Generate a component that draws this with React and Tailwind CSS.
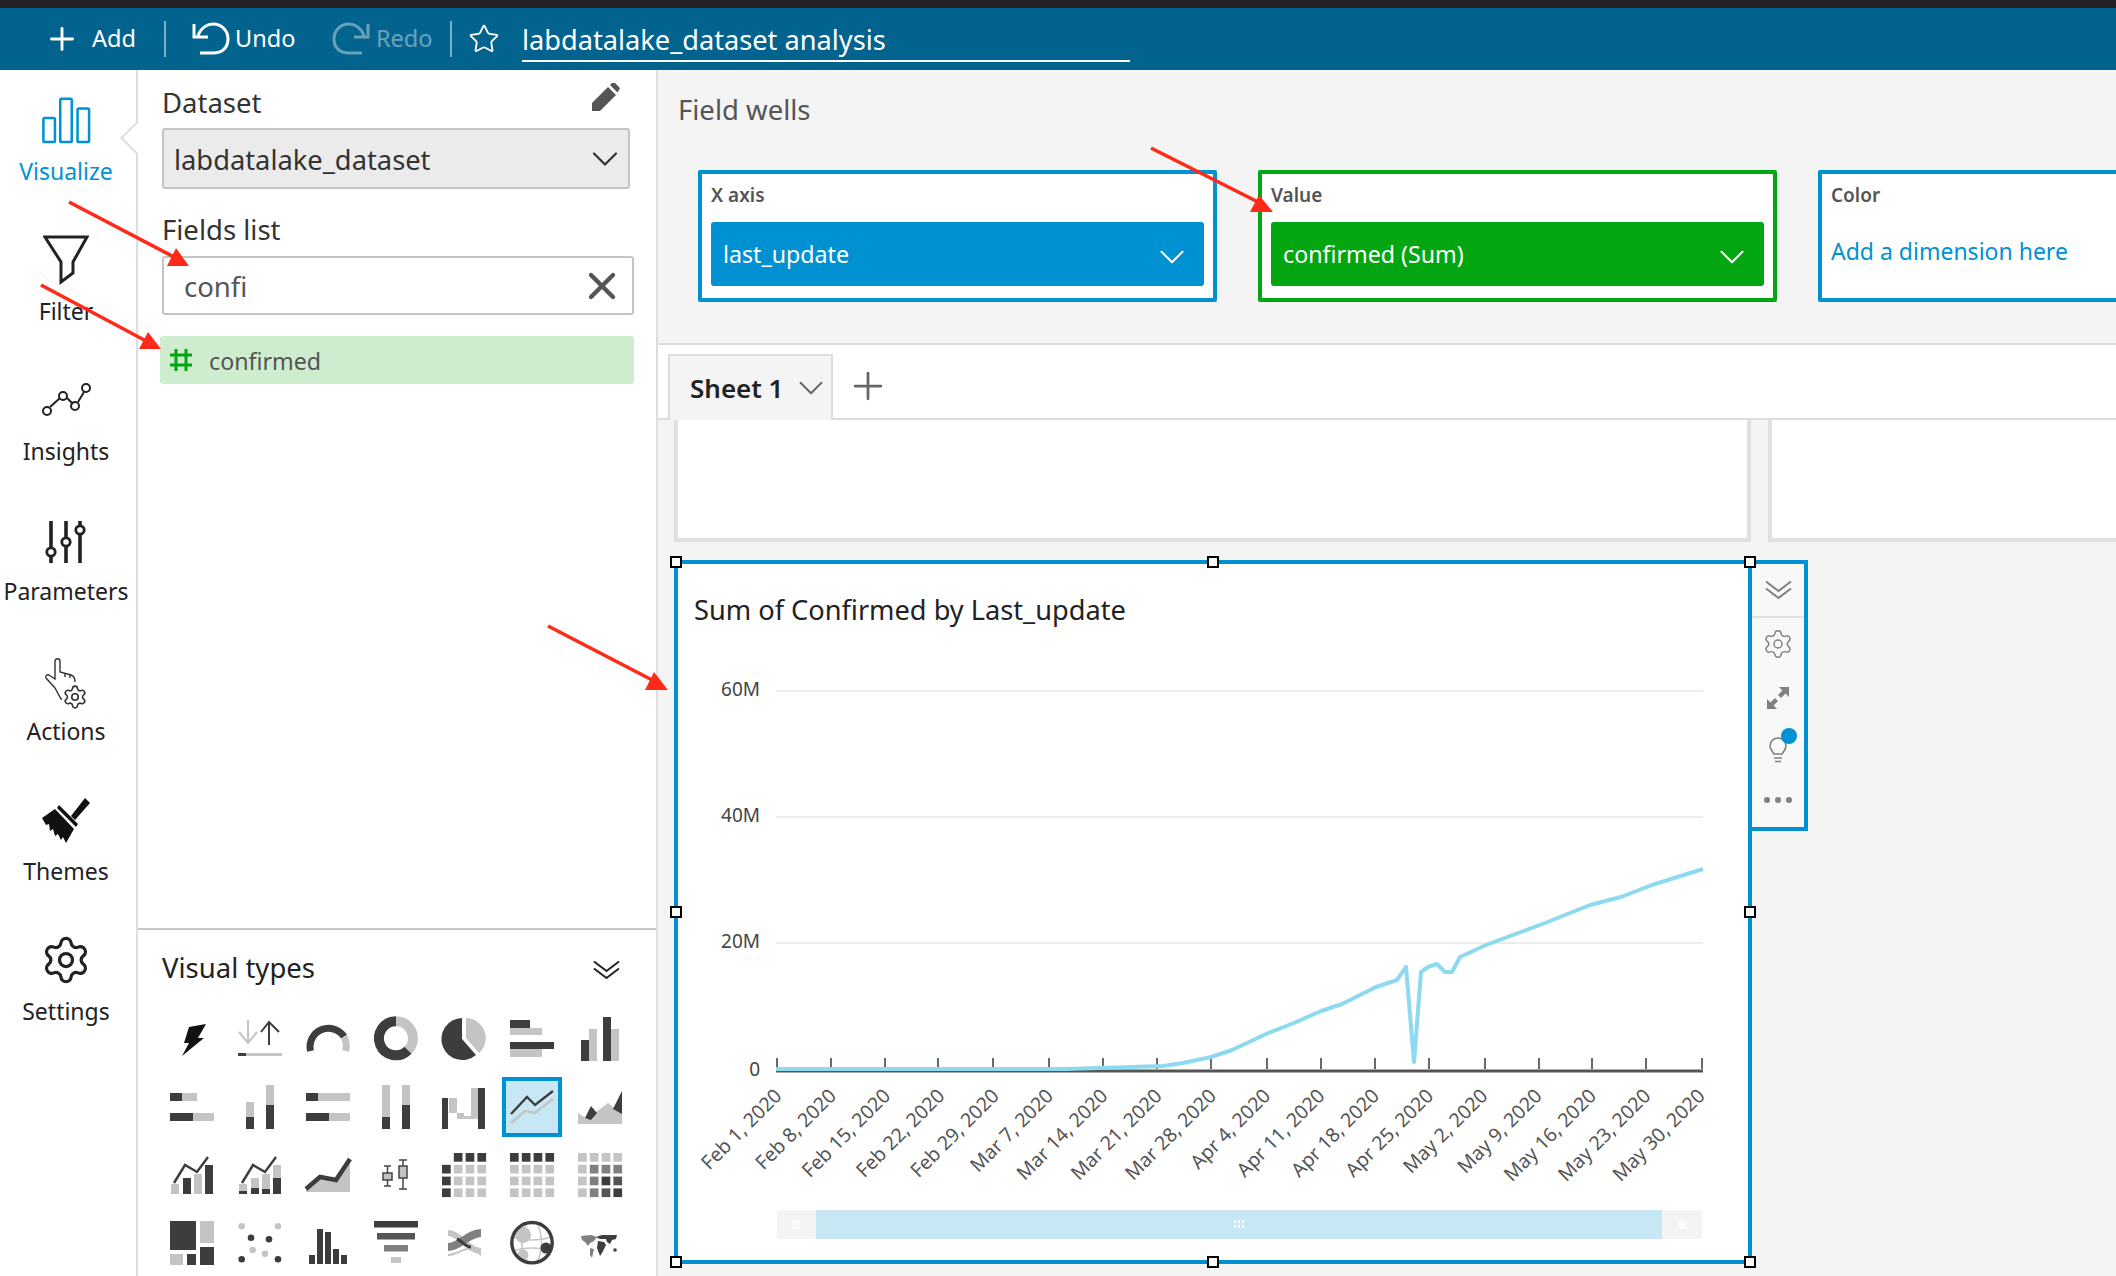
import { ChevronDown, Plus, Settings, Star, X } from "lucide-react";

const DARK = "#3d3d3d";
const LIGHT = "#c4c4c4";
const MID = "#808080";

const railItems = ["Visualize", "Filter", "Insights", "Parameters", "Actions", "Themes", "Settings"];

const tickXs = [777, 831, 885, 938, 993, 1049, 1103, 1157, 1211, 1267, 1321, 1375, 1429, 1485, 1539, 1592, 1646, 1702];

const dateLabels = [
  "Feb 1, 2020", "Feb 8, 2020", "Feb 15, 2020", "Feb 22, 2020", "Feb 29, 2020", "Mar 7, 2020",
  "Mar 14, 2020", "Mar 21, 2020", "Mar 28, 2020", "Apr 4, 2020", "Apr 11, 2020", "Apr 18, 2020",
  "Apr 25, 2020", "May 2, 2020", "May 9, 2020", "May 16, 2020", "May 23, 2020", "May 30, 2020",
];

const linePoints =
  "776,1069 1066,1069 1163,1066 1183,1063 1211,1057 1232,1050 1266,1034 1294,1023 1321,1011 1342,1004 1376,987 1397,980 1406,967 1414,1062 1421,972 1428,967 1437,964 1445,972 1452,972 1460,957 1486,945 1545,923 1590,905 1621,897 1652,885 1703,869";

function Bars({ items }) {
  return items.map(([x, y, w, h, fill], i) => <rect key={i} x={x} y={y} width={w} height={h} fill={fill} />);
}

function GridCells({ rows }) {
  return rows.flatMap((row, r) =>
    row.map((fill, c) =>
      fill ? <rect key={`${r}-${c}`} x={c * 11.8} y={r * 11.8} width="8.7" height="8.7" fill={fill} /> : null
    )
  );
}

function DoubleChevron({ color, className }) {
  return (
    <svg width="27" height="20" viewBox="0 0 27 20" fill="none" stroke={color} strokeWidth="2" className={className}>
      <path d="M1 1.5L13.5 11L26 1.5" />
      <path d="M1 8.5L13.5 18L26 8.5" />
    </svg>
  );
}

const visualIcons = [
  <polygon points="19,10 36,7 28,21 34,21 12,39 19,26 14,26" fill="#111" />,
  <g fill="none" strokeWidth="2">
    <path d="M10 3V26M1 15L10 26L19 15" stroke={LIGHT} />
    <path d="M31 5V28M23 15L31 5L41 15" stroke={DARK} />
    <rect x="0" y="36" width="44" height="3" fill={LIGHT} stroke="none" />
    <rect x="0" y="36" width="8" height="3" fill={DARK} stroke="none" />
  </g>,
  <g fill="none" strokeWidth="7">
    <path d="M4.5 34A18.5 18.5 0 0 1 38 19.7" stroke={DARK} />
    <path d="M38 19.7A18.5 18.5 0 0 1 39.5 34" stroke={LIGHT} />
  </g>,
  <g fill="none" strokeWidth="10">
    <path d="M22 4.3A17 17 0 0 1 34 33.3" stroke={LIGHT} />
    <path d="M34 33.3A17 17 0 1 1 22 4.3" stroke={DARK} />
  </g>,
  <g>
    <path d="M20 22V1A21 21 0 1 0 34 38Z" fill={DARK} />
    <path d="M24 1A20 20 0 0 1 37 36L24 21Z" fill={LIGHT} />
  </g>,
  <Bars items={[[0, 3, 20, 8, DARK], [0, 11, 32, 7, LIGHT], [0, 25, 44, 7, DARK], [0, 32, 32, 8, LIGHT]]} />,
  <Bars items={[[3, 23, 8, 21, DARK], [11, 12, 8, 32, LIGHT], [25, 0, 8, 44, DARK], [33, 12, 8, 32, LIGHT]]} />,

  <Bars items={[[0, 8, 27, 8, LIGHT], [0, 8, 12, 8, DARK], [0, 28, 44, 8, LIGHT], [0, 28, 23, 8, DARK]]} />,
  <Bars items={[[8, 17, 8, 15, LIGHT], [8, 32, 8, 12, DARK], [28, 0, 8, 20, LIGHT], [28, 20, 8, 24, DARK]]} />,
  <Bars items={[[0, 8, 44, 8, LIGHT], [0, 8, 12, 8, DARK], [0, 28, 44, 8, LIGHT], [0, 28, 23, 8, DARK]]} />,
  <Bars items={[[8, 0, 8, 32, LIGHT], [8, 32, 8, 12, DARK], [28, 0, 8, 20, LIGHT], [28, 20, 8, 24, DARK]]} />,
  <Bars items={[[0, 13, 6, 31, DARK], [7, 13, 8, 15, LIGHT], [15, 28, 7, 6, LIGHT], [22, 31, 8, 3, LIGHT], [29, 3, 7, 31, LIGHT], [36, 3, 7, 41, DARK]]} />,
  null,
  <g>
    <polygon points="0,28 9,34 30,18 44,29 44,39 0,39" fill={LIGHT} />
    <polygon points="7,33 13,21 19,28 13,35" fill={DARK} />
    <polygon points="35,24 44,6 44,29" fill={DARK} />
  </g>,

  <g>
    <Bars items={[[1, 31, 8, 10, LIGHT], [13, 25, 8, 16, DARK], [24, 21, 8, 20, LIGHT], [35, 12, 8, 29, DARK]]} />
    <polyline points="4,30 15,12 27,19 38,4" fill="none" stroke={DARK} strokeWidth="2.4" />
  </g>,
  <g>
    <Bars items={[[1, 31, 8, 7, LIGHT], [1, 38, 8, 3, DARK], [13, 25, 8, 10, LIGHT], [13, 35, 8, 6, DARK], [24, 21, 8, 15, LIGHT], [24, 36, 8, 5, DARK], [35, 12, 8, 13, LIGHT], [35, 25, 8, 16, DARK]]} />
    <polyline points="4,30 15,12 27,19 38,4" fill="none" stroke={DARK} strokeWidth="2.4" />
  </g>,
  <g>
    <polygon points="0,36 14,24 30,27 44,6 44,39 0,39" fill={LIGHT} />
    <polyline points="0,36 14,24 30,27 44,6" fill="none" stroke={DARK} strokeWidth="4.5" />
  </g>,
  <g stroke="#444" strokeWidth="1.5" fill="none">
    <path d="M13.5 13V33M10 13H17M10 33H17M29 7V36M25 7H33M25 36H33" />
    <rect x="9" y="20" width="9" height="7" fill={LIGHT} />
    <rect x="25" y="13" width="8" height="12" fill={LIGHT} />
  </g>,
  <GridCells rows={[[null, DARK, DARK, DARK], [DARK, LIGHT, LIGHT, LIGHT], [DARK, LIGHT, LIGHT, LIGHT], [DARK, LIGHT, LIGHT, LIGHT]]} />,
  <GridCells rows={[[DARK, DARK, DARK, DARK], [LIGHT, LIGHT, LIGHT, LIGHT], [LIGHT, LIGHT, LIGHT, LIGHT], [LIGHT, LIGHT, LIGHT, LIGHT]]} />,
  <GridCells rows={[[LIGHT, LIGHT, LIGHT, LIGHT], [LIGHT, MID, MID, MID], [LIGHT, MID, DARK, "#555"], [LIGHT, MID, "#555", DARK]]} />,

  <Bars items={[[0, 0, 26, 29, DARK], [30, 0, 14, 22, LIGHT], [0, 33, 13, 11, LIGHT], [17, 33, 9, 11, DARK], [30, 26, 14, 18, DARK]]} />,
  <g>
    <circle cx="3.7" cy="5.3" r="3.3" fill={LIGHT} />
    <circle cx="40" cy="5.3" r="3.3" fill={LIGHT} />
    <circle cx="14.7" cy="29" r="3.3" fill={LIGHT} />
    <circle cx="27" cy="32.7" r="3.3" fill={LIGHT} />
    <circle cx="13" cy="16.7" r="3.3" fill={DARK} />
    <circle cx="31" cy="18.3" r="3.3" fill={DARK} />
    <circle cx="3.7" cy="38.3" r="3.3" fill={DARK} />
    <circle cx="40" cy="38.3" r="3.3" fill={DARK} />
  </g>,
  <Bars items={[[3, 34, 6, 9, DARK], [11, 8, 6, 35, DARK], [19, 11, 6, 32, DARK], [27, 28, 6, 15, DARK], [35, 34, 6, 9, DARK]]} />,
  <Bars items={[[0, 0, 44, 6.5, DARK], [3, 12, 38, 6.5, "#555"], [10, 24, 24, 6.5, MID], [17, 36, 10, 6, LIGHT]]} />,
  <g fill="none">
    <path d="M6 12C18 12 26 30 39 30" stroke={LIGHT} strokeWidth="6" />
    <path d="M6 26C18 26 26 12 39 12" stroke={MID} strokeWidth="8" />
    <path d="M6 34C18 34 26 20 39 34" stroke={LIGHT} strokeWidth="2" />
    <path d="M15 18C20 20 24 26 29 26" stroke={DARK} strokeWidth="3" />
  </g>,
  <g>
    <circle cx="13" cy="14" r="8" fill={LIGHT} />
    <circle cx="13" cy="34" r="5.5" fill={LIGHT} />
    <path d="M3 16C14 20 30 20 41 16M4 30C14 26 30 26 40 30M17 2C10 14 10 30 17 41M27 2C33 14 33 30 27 41" fill="none" stroke={LIGHT} strokeWidth="1.5" />
    <circle cx="36" cy="27" r="5.5" fill={DARK} />
    <circle cx="22" cy="21.7" r="20.2" fill="none" stroke={DARK} strokeWidth="3.4" />
  </g>,
  <g>
    <path d="M3 15L13 14L19 16L16 20L12 22L10 25L7 21L4 19Z" fill={MID} />
    <path d="M12 27L16 28L14 37L12 34Z" fill={MID} />
    <path d="M18 16L24 14L39 14L38 18L34 19L32 23L29 21L28 18L22 18Z" fill={DARK} />
    <path d="M20 20L26 21L28 24L24 32L22 35L19 27Z" fill={DARK} />
    <circle cx="37" cy="29" r="1.8" fill={DARK} />
  </g>,
];

function VisualizeIcon() {
  return (
    <svg width="50" height="50" viewBox="40 96 52 50" fill="none" stroke="#0091d2" strokeWidth="2.6">
      <rect x="42.5" y="119" width="12" height="25" rx="1.5" />
      <rect x="60" y="99" width="12" height="45" rx="1.5" />
      <rect x="78" y="109" width="12" height="35" rx="1.5" />
    </svg>
  );
}

function RailIcon({ name }) {
  if (name === "Visualize") return <VisualizeIcon />;
  if (name === "Filter") {
    return (
      <svg width="46" height="50" viewBox="0 0 46 50" fill="none" stroke="#222" strokeWidth="3">
        <path d="M2 2H44L30 27V38L18 47V27Z" />
      </svg>
    );
  }
  if (name === "Insights") {
    return (
      <svg width="50" height="36" viewBox="0 0 50 36" fill="none" stroke="#222" strokeWidth="2">
        <path d="M9 25L19 16M26 16L32 22M37 20L43 10" />
        <circle cx="6" cy="29" r="4" />
        <circle cx="22" cy="14" r="4" />
        <circle cx="34" cy="24" r="4" />
        <circle cx="45" cy="6" r="4" />
      </svg>
    );
  }
  if (name === "Parameters") {
    return (
      <svg width="42" height="46" viewBox="0 0 42 46" fill="none" stroke="#222" strokeWidth="3.6" className="mt-[4px]">
        <path d="M6 2V44M21 2V44M35 2V44" />
        <circle cx="6" cy="33" r="4.2" fill="#fff" strokeWidth="2.8" />
        <circle cx="21" cy="23" r="4.2" fill="#fff" strokeWidth="2.8" />
        <circle cx="35" cy="11" r="4.2" fill="#fff" strokeWidth="2.8" />
      </svg>
    );
  }
  if (name === "Actions") {
    return (
      <div className="relative w-[44px] h-[52px] mt-[8px]">
        <svg width="34" height="46" viewBox="0 0 34 46" fill="none" stroke="#333" strokeWidth="1.4">
          <path d="M11 30L2 20C1 18 3 16 5 17L11 21V3C11 0 16 0 16 3V14L27 17C30 18 31 20 31 24M11 30L17 41H22" />
          <path d="M21 15V19M26 16V20" />
        </svg>
        <Settings size={26} strokeWidth={1.5} color="#333" className="absolute right-0 bottom-0 bg-white rounded-full" />
      </div>
    );
  }
  if (name === "Themes") {
    return (
      <svg width="50" height="48" viewBox="0 0 50 48" fill="#111" className="mt-[2px]">
        <polygon points="30,19 44,1 49,6 34,23" />
        <polygon points="18,8 37,27 35,30 16,11" />
        <polygon points="14,12 33,32 25,46 22,40 20,43 17,37 14,39 12,32 9,34 8,27 5,28 1,21" />
      </svg>
    );
  }
  return <Settings size={52} strokeWidth={1.5} color="#222" />;
}

function HeaderButton({ icon, label, className }) {
  return (
    <div className={`flex items-center ${className}`}>
      {icon}
      <span className="text-[23.5px] leading-none">{label}</span>
    </div>
  );
}

function Well({ title, color, pill, children }) {
  const borderClass = color === "green" ? "border-[#02a610]" : "border-[#0091d2]";
  const pillClass = color === "green" ? "bg-[#02a610]" : "bg-[#0091d2]";
  return (
    <div className={`w-[519px] h-[132px] shrink-0 border-[4px] ${borderClass} bg-white rounded-[2px] pl-[9px] pr-[9px] pt-[8px]`}>
      <div className="text-[19px] leading-[26px] font-semibold text-[#555]">{title}</div>
      {pill ? (
        <div className={`mt-[14px] h-[64px] rounded-[3px] ${pillClass} flex items-center justify-between pl-[12px] pr-[11px] text-white`}>
          <span className="text-[23.2px]">{pill}</span>
          <ChevronDown size={42} strokeWidth={1.2} className="mt-[6px]" />
        </div>
      ) : (
        children
      )}
    </div>
  );
}

function Handle({ className }) {
  return <div className={`absolute w-[12px] h-[12px] bg-white border-2 border-black z-10 ${className}`} />;
}

function LineChart() {
  return (
    <svg width="1069" height="620" viewBox="678 640 1069 620" className="block">
      {[[691, "60M"], [817, "40M"], [943, "20M"], [1071, "0"]].map(([y, label]) => (
        <text key={label} x="760" y={y + 5} textAnchor="end" fontSize="19" fill="#444">{label}</text>
      ))}
      {[691, 817, 943].map((y) => (
        <line key={y} x1="776" x2="1703" y1={y} y2={y} stroke="#ececec" strokeWidth="2" />
      ))}
      {tickXs.map((x) => (
        <line key={x} x1={x} x2={x} y1="1058" y2="1069" stroke="#444" strokeWidth="1.6" />
      ))}
      <line x1="776" x2="1703" y1="1071" y2="1071" stroke="#555" strokeWidth="3" />
      <polyline points={linePoints} fill="none" stroke="#8ddaf0" strokeWidth="4" strokeLinejoin="round" />
      {dateLabels.map((label, i) => (
        <text
          key={label}
          x={0}
          y={0}
          transform={`translate(${783 + i * 54.3} 1097) rotate(-45)`}
          textAnchor="end"
          fontSize="19.5"
          fill="#555"
        >
          {label}
        </text>
      ))}
      <rect x="777" y="1210" width="925" height="29" fill="#f4f4f4" />
      <rect x="816" y="1210" width="846" height="29" fill="#c7e7f4" />
      <path d="M1235 1220V1229M1239 1220V1229M1243 1220V1229" stroke="#fff" strokeWidth="2" strokeDasharray="3 2" />
      <rect x="792" y="1220" width="8" height="9" fill="#fafafa" />
      <rect x="1678" y="1220" width="8" height="9" fill="#fafafa" />
    </svg>
  );
}

function Arrow({ x1, y1, x2, y2, head }) {
  return (
    <g>
      <line x1={x1} y1={y1} x2={x2} y2={y2} stroke="#ff2a1a" strokeWidth="3.6" />
      <polygon points={head} fill="#ff2a1a" />
    </g>
  );
}

export default function App() {
  return (
    <div className="relative w-[2116px] h-[1276px] overflow-hidden bg-white flex flex-col text-[#333] font-['Noto_Sans',sans-serif]">
      <div className="h-[8px] bg-[#232323] shrink-0" />

      {/* Top toolbar */}
      <div className="h-[62px] shrink-0 bg-[#03638f] flex items-center text-white pl-[44px]">
        <HeaderButton icon={<Plus size={36} strokeWidth={1.9} className="mr-[12px]" />} label="Add" className="w-[120px]" />
        <div className="w-[2px] h-[36px] bg-[#7fb0c6]" />
        <HeaderButton
          icon={
            <svg width="40" height="34" viewBox="0 0 40 34" fill="none" stroke="#fff" strokeWidth="3" className="mr-[4px]">
              <path d="M3 2V15H17" />
              <path d="M7 14C10 5 17 2 22 2C31 2 37 9 37 17C37 26 31 31 22 31H9" />
            </svg>
          }
          label="Undo"
          className="ml-[25px] w-[140px]"
        />
        <HeaderButton
          icon={
            <svg width="40" height="34" viewBox="0 0 40 34" fill="none" stroke="#fff" strokeWidth="3" className="mr-[5px]">
              <path d="M37 2V15H23" />
              <path d="M33 14C30 5 23 2 18 2C9 2 3 9 3 17C3 26 9 31 18 31H31" />
            </svg>
          }
          label="Redo"
          className="w-[119px] opacity-40"
        />
        <div className="w-[2px] h-[36px] bg-[#7fb0c6]" />
        <Star size={32} strokeWidth={1.4} className="ml-[16px]" />
        <div className="ml-[22px] w-[608px] h-[40px] border-b-2 border-white text-[27.2px] leading-[36px] self-end mb-[8px]">
          labdatalake_dataset analysis
        </div>
      </div>

      <div className="flex flex-1 min-h-0">
        {/* Left rail */}
        <div className="w-[138px] shrink-0 border-r-2 border-[#dedede] pt-[13px] pr-[4px] flex flex-col items-center">
          {railItems.map((name) => (
            <div key={name} className="h-[140px] w-full shrink-0 flex flex-col items-center">
              <div className="h-[74px] flex items-center justify-center">
                <RailIcon name={name} />
              </div>
              <div className={`text-[23px] leading-[28px] whitespace-nowrap ${name === "Visualize" ? "text-[#0091d2]" : "text-[#222]"}`}>
                {name}
              </div>
            </div>
          ))}
        </div>

        {/* Dataset panel */}
        <div className="relative w-[520px] shrink-0 border-r-2 border-[#dedede] flex flex-col">
          <div className="absolute -left-[13px] top-[56px] w-[24px] h-[24px] rotate-45 bg-white border-l-2 border-b-2 border-[#dedede]" />
          <div className="relative flex-1 pl-[24px] pr-[24px]">
            <div className="flex items-center justify-between h-[58px] pr-[10px] pt-[8px] w-[468px]">
              <span className="text-[27.5px] leading-[36px] text-[#333]">Dataset</span>
              <svg width="28" height="28" viewBox="0 0 28 28" fill="#555" className="-mt-[12px]">
                <path d="M0 28V20L16 4L24 12L8 28Z" />
                <path d="M18 2L20 0C21 -1 22 -1 23 0L27 4C28 5 28 6 27 7L25.5 9.5Z" />
              </svg>
            </div>
            <div className="h-[61px] w-[468px] bg-[#ebebeb] border-2 border-[#c4c4c4] rounded-[3px] flex items-center justify-between pl-[10px] pr-[1px]">
              <span className="text-[27.3px] leading-[36px] mt-[2px] text-[#333]">labdatalake_dataset</span>
              <ChevronDown size={44} strokeWidth={1.2} color="#333" />
            </div>
            <div className="text-[27.5px] leading-[36px] mt-[23px] text-[#333]">Fields list</div>
            <div className="mt-[8px] h-[59px] w-[472px] border-2 border-[#c4c4c4] rounded-[3px] flex items-center justify-between pl-[20px] pr-[8px]">
              <span className="text-[27.5px] leading-[36px] mt-[2px] text-[#555]">confi</span>
              <X size={44} strokeWidth={2.4} color="#555" />
            </div>
            <div className="mt-[21px] -ml-[2px] h-[48px] w-[474px] rounded-[3px] bg-[#ceecce] flex items-center pl-[8px]">
              <svg width="26" height="26" viewBox="0 0 26 26" fill="none" stroke="#02a610" strokeWidth="3" className="mr-[15px]">
                <path d="M8 2V24M18 2V24M2 8H24M2 18H24" />
              </svg>
              <span className="text-[23.2px] leading-[32px] mt-[2px] text-[#555]">confirmed</span>
            </div>
          </div>

          {/* Visual types */}
          <div className="relative h-[348px] shrink-0 bg-white border-t-2 border-[#c8c8c8] pl-[32px]">
            <div className="-ml-[8px] pb-[2px] flex items-center justify-between pr-[36px] h-[78px]">
              <span className="text-[27.5px] leading-[36px] text-[#222]">Visual types</span>
              <DoubleChevron color="#222" className="mt-[4px]" />
            </div>
            <div className="mt-[9px] grid grid-cols-[repeat(7,44px)] grid-rows-[repeat(4,44px)] gap-x-[24px] gap-y-[24px]">
              {visualIcons.map((icon, i) =>
                icon ? (
                  <svg key={i} width="44" height="44" viewBox="0 0 44 44" className="overflow-visible">
                    {icon}
                  </svg>
                ) : (
                  <div key={i} className="relative w-[44px] h-[44px]">
                    <div className="absolute -left-[8px] -top-[8px] w-[60px] h-[60px] bg-[#c7e7f4] border-[4px] border-[#0091d2]">
                      <svg width="52" height="52" viewBox="4 4 52 52" fill="none" strokeWidth="2.4">
                        <polyline points="9,46 23,34 33,36 51,22" stroke={LIGHT} />
                        <polyline points="9,37 25,20 33,28 51,14" stroke={DARK} />
                      </svg>
                    </div>
                  </div>
                )
              )}
            </div>
          </div>
        </div>

        {/* Main column */}
        <div className="flex-1 min-w-0 flex flex-col overflow-hidden">
          <div className="h-[273px] shrink-0 bg-[#f4f4f4] pl-[20px]">
            <div className="text-[27.5px] text-[#555] pt-[22px] leading-[36px]">Field wells</div>
            <div className="mt-[42px] ml-[20px] flex gap-[41px]">
              <Well title="X axis" color="blue" pill="last_update" />
              <Well title="Value" color="green" pill="confirmed (Sum)" />
              <Well title="Color" color="blue">
                <div className="mt-[26px] text-[23px] leading-[34px] text-[#0091d2]">Add a dimension here</div>
              </Well>
            </div>
          </div>

          {/* Sheet tabs */}
          <div className="h-[77px] shrink-0 bg-white border-t-2 border-b-2 border-[#dcdcdc] flex items-end pl-[10px]">
            <div className="w-[165px] h-[66px] -mb-[2px] bg-[#f4f4f4] border-2 border-b-0 border-[#dcdcdc] flex items-center pl-[20px] justify-between">
              <span className="text-[26px] font-semibold text-[#222]">Sheet 1</span>
              <ChevronDown size={42} strokeWidth={1.1} color="#666" className="-mr-[1px]" />
            </div>
            <Plus size={44} strokeWidth={1.5} color="#666" className="ml-[13px] mb-[10px]" />
          </div>

          {/* Canvas */}
          <div className="flex-1 min-h-0 bg-[#f4f4f4] pl-[16px]">
            <div className="flex h-[122px] gap-[17px]">
              <div className="w-[1077px] bg-white border-4 border-t-0 border-[#e0e0e0]" />
              <div className="flex-1 bg-white border-4 border-t-0 border-r-0 border-[#e0e0e0]" />
            </div>
            <div className="flex items-start mt-[18px]">
              <div className="relative w-[1078px] h-[704px] bg-white border-4 border-[#0091d2]">
                <Handle className="-left-[8px] -top-[8px]" />
                <Handle className="left-1/2 -translate-x-1/2 -top-[8px]" />
                <Handle className="-right-[8px] -top-[8px]" />
                <Handle className="-left-[8px] top-1/2 -translate-y-1/2" />
                <Handle className="-right-[8px] top-1/2 -translate-y-1/2" />
                <Handle className="-left-[8px] -bottom-[8px]" />
                <Handle className="left-1/2 -translate-x-1/2 -bottom-[8px]" />
                <Handle className="-right-[8px] -bottom-[8px]" />
                <div className="h-[76px] pt-[31px] pl-[16px] text-[27.2px] leading-[30px] text-[#222]">
                  Sum of Confirmed by Last_update
                </div>
                <LineChart />
              </div>

              {/* Visual side menu */}
              <div className="w-[56px] h-[271px] bg-[#f8f8f8] border-4 border-l-0 border-[#0091d2] flex flex-col items-center text-[#808080]">
                <div className="h-[54px] w-full border-b-2 border-[#e0e0e0] flex items-center justify-center shrink-0">
                  <DoubleChevron color="#808080" />
                </div>
                <div className="h-[54px] flex items-center justify-center">
                  <Settings size={32} strokeWidth={1.1} className="-mt-[2px]" />
                </div>
                <div className="h-[52px] flex items-center justify-center">
                  <svg width="22" height="22" viewBox="0 0 22 22" fill="#808080">
                    <path d="M12 0H22V10L18.6 6.6L14 11L11 8L15.4 3.4Z" />
                    <path d="M0 22V12L3.4 15.4L8 11L11 14L6.6 18.6L10 22Z" />
                  </svg>
                </div>
                <div className="relative h-[52px] w-full flex items-center justify-center">
                  <svg width="18" height="26" viewBox="0 0 18 26" fill="none" stroke="#808080" strokeWidth="1.6">
                    <path d="M5 17C3 14 1 12 1 9C1 4 5 1 9 1C13 1 17 4 17 9C17 12 15 14 13 17Z" />
                    <path d="M5 21H13M6 24.5H12" />
                  </svg>
                  <div className="absolute left-[29px] top-[4px] w-[16px] h-[16px] rounded-full bg-[#0091d2]" />
                </div>
                <div className="flex gap-[5px] mt-[21px]">
                  <div className="w-[6px] h-[6px] rounded-full bg-[#808080]" />
                  <div className="w-[6px] h-[6px] rounded-full bg-[#808080]" />
                  <div className="w-[6px] h-[6px] rounded-full bg-[#808080]" />
                </div>
              </div>
            </div>
          </div>
        </div>
      </div>

      {/* Red annotation arrows drawn over the screenshot */}
      <svg width="2116" height="1276" className="absolute left-0 top-0 pointer-events-none">
        <Arrow x1={69} y1={202} x2={176} y2={258} head="176,248 167,266 189,266" />
        <Arrow x1={41} y1={285} x2={148} y2={342} head="148,332 139,349 161,349" />
        <Arrow x1={1151} y1={148} x2={1262} y2={204} head="1259,195 1250,212 1273,212" />
        <Arrow x1={548} y1={626} x2={656} y2={682} head="654,672 645,690 668,690" />
      </svg>
    </div>
  );
}
